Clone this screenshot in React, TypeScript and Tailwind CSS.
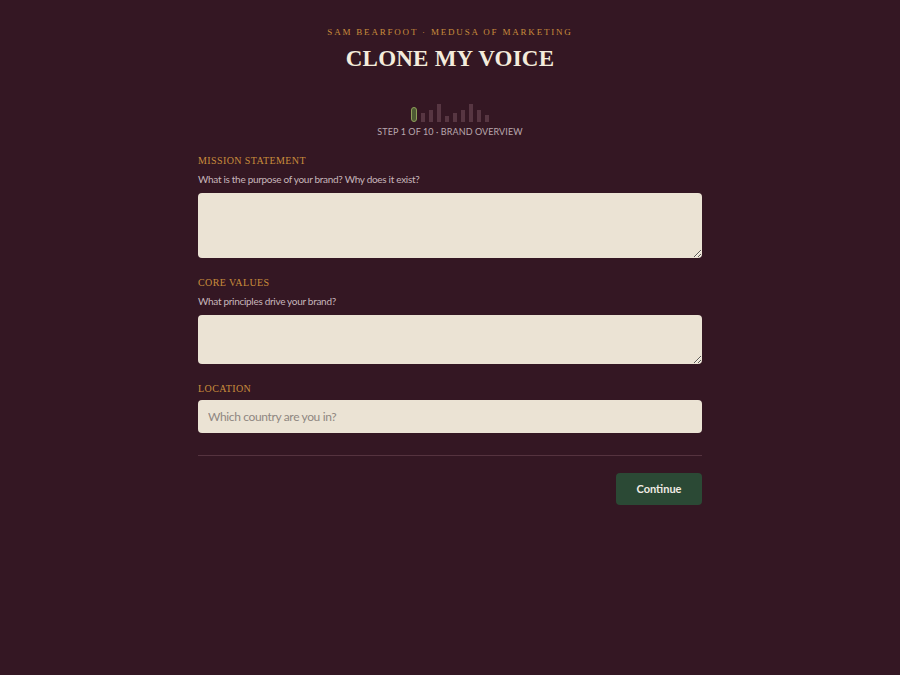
import { useState } from 'react';

const bars = [15, 9, 12, 18, 6, 9, 12, 18, 12, 7];

const serif = { fontFamily: '"Liberation Serif", "DejaVu Serif", serif' };

const Field = ({ label, hint, children }: { label: string; hint?: string; children: React.ReactNode }) => (
  <div className="flex flex-col">
    <div className="text-[10px] tracking-[0.04em] text-[#c98d3c] leading-none" style={serif}>
      {label}
    </div>
    {hint && <div className="mt-[8px] text-[10px] tracking-[-0.03em] text-[#c7b6bb] leading-none">{hint}</div>}
    <div className={hint ? 'mt-[9px]' : 'mt-[6px]'}>{children}</div>
  </div>
);

const App = () => {
  const [mission, setMission] = useState('');
  const [values, setValues] = useState('');
  const [location, setLocation] = useState('');

  return (
    <div className="min-h-[675px] w-full bg-[#341723] flex justify-center" style={{ fontFamily: 'Lato, "Open Sans", sans-serif' }}>
      <div className="w-[504px] flex flex-col">
        {/* header */}
        <div className="flex flex-col items-center pt-[28px]">
          <div className="text-[9px] tracking-[0.2em] text-[#c98d3c] leading-none" style={serif}>
            SAM BEARFOOT · MEDUSA OF MARKETING
          </div>
          <h1 className="mt-[10px] text-[23px] font-bold text-[#f4ecdc] leading-none tracking-[0.01em]" style={serif}>
            CLONE MY VOICE
          </h1>
        </div>

        {/* progress */}
        <div className="mt-[33px] flex flex-col items-center">
          <div className="flex items-end gap-[4px] h-[19px]">
            {bars.map((h, i) =>
              i === 0 ? (
                <div key={i} className="w-[6px] h-[15px] rounded-full border border-[#8fa05a] bg-[#4d5a33]" />
              ) : (
                <div key={i} className="w-[4px] bg-[#573642]" style={{ height: h }} />
              )
            )}
          </div>
          <div className="mt-[5px] text-[9px] text-[#b9a7ae] leading-none tracking-[0.01em]">
            STEP 1 OF 10 · BRAND OVERVIEW
          </div>
        </div>

        {/* form */}
        <div className="mt-[20px] flex flex-col gap-[20px]">
          <Field label="MISSION STATEMENT" hint="What is the purpose of your brand? Why does it exist?">
            <textarea
              value={mission}
              onChange={(e) => setMission(e.target.value)}
              className="block w-full h-[65px] rounded-[4px] bg-[#ebe3d4] px-[10px] py-[8px] text-[12px] text-[#3a2a2e] outline-none resize-y"
            />
          </Field>
          <Field label="CORE VALUES" hint="What principles drive your brand?">
            <textarea
              value={values}
              onChange={(e) => setValues(e.target.value)}
              className="block w-full h-[49px] rounded-[4px] bg-[#ebe3d4] px-[10px] py-[8px] text-[12px] text-[#3a2a2e] outline-none resize-y"
            />
          </Field>
          <Field label="LOCATION">
            <input
              value={location}
              onChange={(e) => setLocation(e.target.value)}
              placeholder="Which country are you in?"
              className="block w-full h-[33px] rounded-[4px] bg-[#ebe3d4] px-[10px] text-[12px] tracking-[-0.03em] text-[#3a2a2e] placeholder:text-[#8f8781] outline-none"
            />
          </Field>
        </div>

        <div className="mt-[22px] h-px bg-[#55333f]" />

        <div className="mt-[17px] flex justify-end">
          <button className="w-[86px] h-[32px] rounded-[4px] bg-[#2b4935] text-[11px] font-bold text-[#f1ece4]">
            Continue
          </button>
        </div>
      </div>
    </div>
  );
};

export default App;
